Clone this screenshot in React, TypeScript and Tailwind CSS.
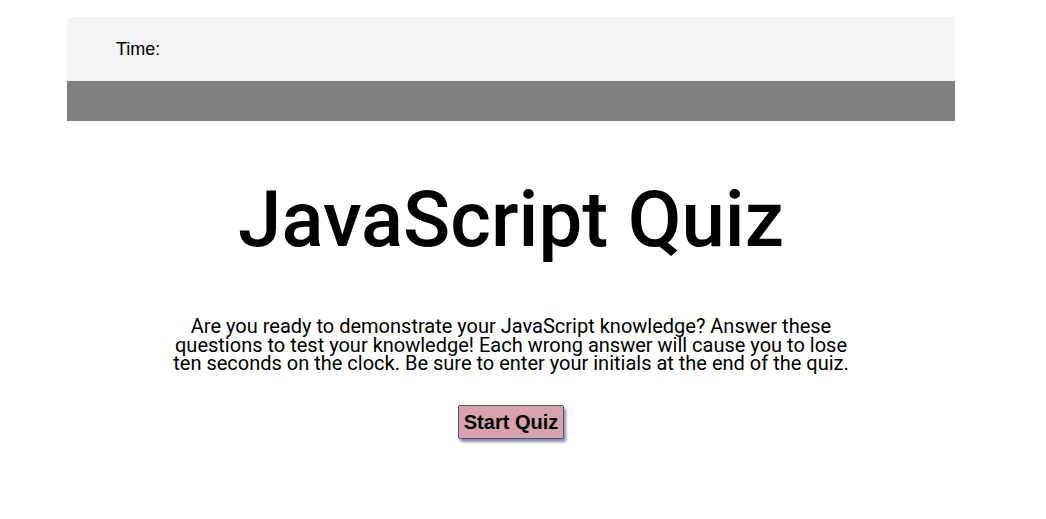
export default function App() {
  return (
    <div className="min-h-screen bg-white pt-[17px]">
      <header className="mx-[67px] w-[888px]">
        <div className="flex h-[64px] items-center bg-[#f4f4f4] pl-[49px] font-['Liberation_Sans',Arial,sans-serif] text-[18px] text-black">
          <span className="pt-[1px]">Time:</span>
        </div>
        <div className="h-[40px] bg-[#808080]" />
      </header>

      <main className="mx-[67px] flex w-[888px] flex-col items-center">
        <h1 className="mt-[51px] font-['Roboto',sans-serif] text-[78px] font-medium leading-[96px] text-black">
          JavaScript Quiz
        </h1>
        <p className="mt-[49px] w-[690px] text-center font-['Roboto',sans-serif] text-[20px] leading-[18.5px] text-black">
          Are you ready to demonstrate your JavaScript knowledge? Answer these questions to test your knowledge! Each wrong answer will cause you to lose ten seconds on the clock. Be sure to enter your initials at the end of the quiz.
        </p>
        <button
          type="button"
          className="mt-[32px] h-[34px] rounded-[2px] border border-[#4a5a7a] bg-[#d8a1ae] px-[5px] font-['Liberation_Sans',Arial,sans-serif] text-[20px] font-bold text-black shadow-[2px_3px_3px_rgba(60,60,110,0.6)]"
        >
          Start Quiz
        </button>
      </main>
    </div>
  );
}
